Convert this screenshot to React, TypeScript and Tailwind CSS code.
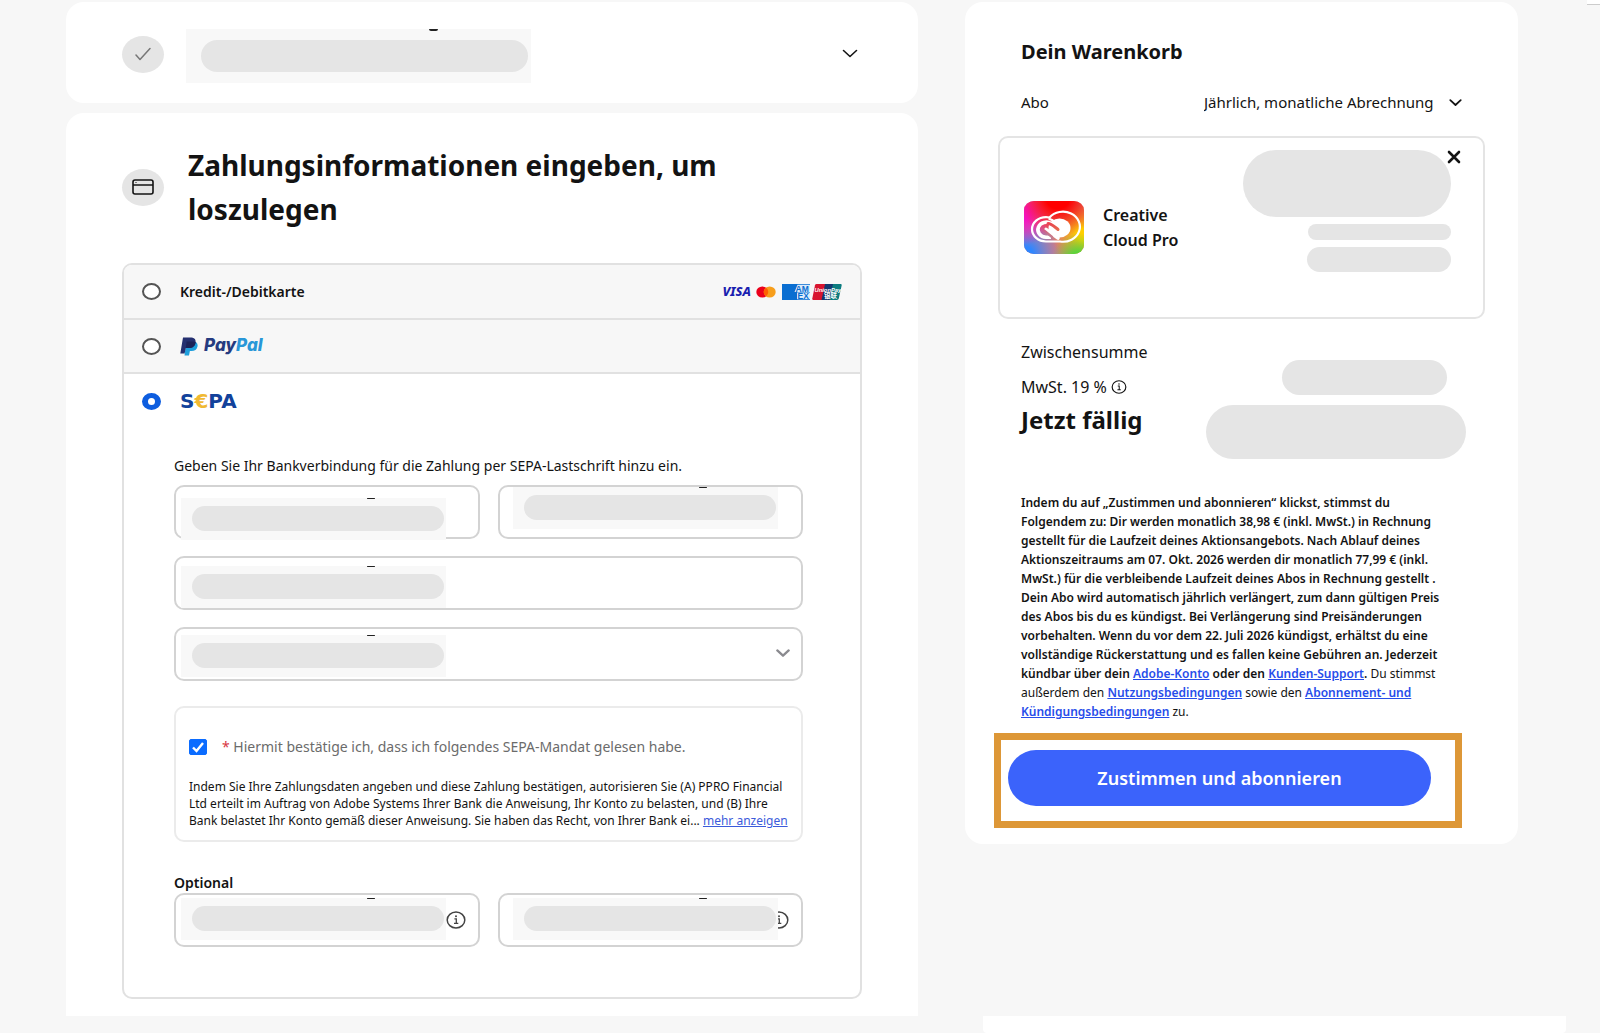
import { useState } from "react";

const INPUT =
  "block h-[54px] w-full rounded-[10px] border-2 border-[#d3d3d3] bg-white px-4 text-sm outline-none";

const RADIO =
  "h-[17px] w-[19px] appearance-none rounded-[50%] border-2 border-[#555] bg-white checked:border-x-[6px] checked:border-y-[5px] checked:border-[#0d5ddf]";

const LINK = "font-semibold text-[#274dea] underline";

// Greyed-out value on a light patch
function Redacted({ className }: { className: string }) {
  return (
    <span className={`pointer-events-none absolute h-[42px] w-[265px] bg-[#f8f8f8] pt-2 pl-[11px] ${className}`}>
      <span className="block h-[25px] w-[252px] rounded-full bg-[#e5e5e5]" />
      <span className="absolute top-0 left-[186px] h-px w-2 rounded-full bg-[#222]" />
    </span>
  );
}

function Chevron({ className, stroke }: { className: string; stroke: number }) {
  return (
    <svg viewBox="0 0 16 10" fill="none" aria-hidden="true" className={className}>
      <path d="M1.5 1.5L8 7.5l6.5-6" stroke="currentColor" strokeWidth={stroke} strokeLinecap="round" strokeLinejoin="round" />
    </svg>
  );
}

function InfoIcon({ className }: { className: string }) {
  return (
    <svg viewBox="0 0 20 18" fill="none" aria-hidden="true" className={className}>
      <ellipse cx="10" cy="9" rx="8.8" ry="8" stroke="currentColor" strokeWidth="1.5" />
      <path d="M8.4 7.8h1.9v4.4M8 12.4h4.3" stroke="currentColor" strokeWidth="1.3" />
      <circle cx="10" cy="5.2" r="1" fill="currentColor" />
    </svg>
  );
}

function PayPalMark() {
  return (
    <svg viewBox="0 0 18 19" aria-hidden="true" className="h-[19px] w-[18px]">
      <path d="M6.3 4.5h6.8c3.4 0 5 1.9 4.4 5-.6 3.2-2.8 4.5-6 4.5H9.9l-.9 4.5H4.5z" fill="#1f9fdc" />
      <path d="M3 .5h7.2c4 0 6 1.8 5.3 5.3-.7 3.8-3.2 5.3-7 5.3H5.8L4.6 16.5H.3z" fill="#253070" />
      <path d="M6.6 4.5h6.5c1 0 1.9.2 2.5.6v.7c-.7 3.8-3.2 5.3-7 5.3H5.8z" fill="#1d2258" />
    </svg>
  );
}

function MastercardMark() {
  return (
    <svg viewBox="0 0 20 12" aria-hidden="true" className="h-3 w-5">
      <ellipse cx="6.3" cy="6" rx="6" ry="5.6" fill="#eb001b" />
      <ellipse cx="13.7" cy="6" rx="6" ry="5.6" fill="#f79e1b" />
      <path d="M10 1.6a6 5.6 0 0 1 0 8.8 6 5.6 0 0 1 0-8.8z" fill="#ff5f00" />
    </svg>
  );
}

function AmexMark() {
  return (
    <svg viewBox="0 0 28 16" aria-hidden="true" className="h-4 w-7">
      <rect width="28" height="16" fill="#0a6ed1" />
      <path d="M15.5.8H28V8H12.5zM15 8.5h13v6.7H15z" fill="#dcebfa" />
      <text x="13.5" y="7.5" fontSize="8.5" fontWeight="700" fill="#0a6ed1" fontFamily="Liberation Sans, sans-serif">AM</text>
      <text x="15.5" y="14.8" fontSize="8.5" fontWeight="700" fill="#0a6ed1" fontFamily="Liberation Sans, sans-serif">EX</text>
    </svg>
  );
}

function UnionPayMark() {
  return (
    <svg viewBox="0 0 30 16" aria-hidden="true" className="h-4 w-[30px]">
      <path d="M4.5 0H14l-3.5 16H1.5Q0 16 .3 14.5L3 1.3Q3.3 0 4.5 0z" fill="#d8142f" />
      <path d="M13 0h9l-3.5 16h-9z" fill="#14386f" />
      <path d="M21 0h7.5q1.5 0 1.2 1.3L26.8 14.6Q26.5 16 25 16h-7.5z" fill="#0c7c80" />
      <text x="2.500" y="7.500" fontSize="5.800" fontWeight="700" fontStyle="italic" fill="#fff" fontFamily="Liberation Sans, sans-serif">UnionPay</text>
      <text x="12" y="14" fontSize="6.500" fontWeight="700" fill="#fff" fontFamily="Noto Sans CJK SC, sans-serif">银联</text>
    </svg>
  );
}

function CreativeCloudMark() {
  return (
    <svg viewBox="0 0 60 53" fill="none" aria-hidden="true" className="h-[53px] w-[60px] shrink-0">
      <defs>
        <clipPath id="cc-clip"><rect width="60" height="53" rx="10" ry="9" /></clipPath>
        <radialGradient id="cc-red" cx="34" cy="-4" r="40" gradientUnits="userSpaceOnUse">
          <stop offset="0.3" stopColor="#ff0000" /><stop offset="1" stopColor="#ff2000" stopOpacity="0" />
        </radialGradient>
        <radialGradient id="cc-pink" cx="0" cy="12" r="32" gradientUnits="userSpaceOnUse">
          <stop offset="0.2" stopColor="#f413c8" /><stop offset="1" stopColor="#f413c8" stopOpacity="0" />
        </radialGradient>
        <radialGradient id="cc-blue" cx="2" cy="53" r="34" gradientUnits="userSpaceOnUse">
          <stop offset="0.2" stopColor="#2f86ff" /><stop offset="1" stopColor="#4a8bff" stopOpacity="0" />
        </radialGradient>
        <radialGradient id="cc-green" cx="54" cy="58" r="26" gradientUnits="userSpaceOnUse">
          <stop offset="0.15" stopColor="#3fdf3a" /><stop offset="1" stopColor="#5edb3c" stopOpacity="0" />
        </radialGradient>
        <radialGradient id="cc-yellow" cx="60" cy="34" r="32" gradientUnits="userSpaceOnUse">
          <stop offset="0.2" stopColor="#ffcf00" /><stop offset="1" stopColor="#ffa000" stopOpacity="0" />
        </radialGradient>
        <mask id="cc-mask" maskUnits="userSpaceOnUse" x="0" y="0" width="60" height="53">
          <g stroke="#fff">
            <path d="M22 40.5a14 12.2 0 0 1 0-24.400q2 0 3.500.4A17 15 0 1 1 36 40.500z" strokeWidth="2.200" />
            <ellipse cx="35.500" cy="27" rx="11" ry="9.500" fill="#fff" stroke="none" />
            <path d="M27 36.200h-5a8.500 7.500 0 1 1 5.500-13.500" strokeWidth="3.600" />
            <path d="M22 28.500l12 8.500" strokeWidth="3.600" strokeLinecap="round" />
            <path d="M24.500 17.500q4 1 8 5" strokeWidth="2.200" />
          </g>
          <g stroke="#000" strokeLinecap="round">
            <path d="M24 22.500c3 0 5 2 10 6" strokeWidth="3" />
            <path d="M20 29.500l8 6.500" strokeWidth="2.400" />
          </g>
        </mask>
      </defs>
      <g clipPath="url(#cc-clip)">
        <rect width="60" height="53" fill="#d67a80" />
        <rect width="60" height="53" fill="url(#cc-blue)" />
        <rect width="60" height="53" fill="url(#cc-pink)" />
        <rect width="60" height="53" fill="url(#cc-yellow)" />
        <rect width="60" height="53" fill="url(#cc-red)" />
        <rect width="60" height="53" fill="url(#cc-green)" />
      </g>
      <rect width="60" height="53" fill="#fff" mask="url(#cc-mask)" />
    </svg>
  );
}

export default function App() {
  const [method, setMethod] = useState("sepa");

  return (
    <div className="relative min-h-screen overflow-hidden bg-[#f7f7f7] font-['Noto_Sans','Liberation_Sans',sans-serif] text-[#131313]">
      <div className="absolute top-0 right-0 h-[5px] w-[13px] border-b border-[#ccc] bg-white" />

      <main className="grid grid-cols-[852fr_553fr] items-start gap-x-[47px] pt-[2px] pr-[82px] pl-[66px]">
        <div className="flex flex-col gap-[10px]">
          {/* Finished step */}
          <section className="flex items-center rounded-[18px] bg-white pt-[23px] pr-[60px] pb-5 pl-14">
            <span className="flex h-[37px] w-[42px] shrink-0 items-center justify-center rounded-[50%] bg-[#e5e5e5] text-[#777]">
              <svg viewBox="0 0 16 14" fill="none" aria-hidden="true" className="h-[14px] w-4">
                <path d="M1 8l4 4.5L15 1.5" stroke="currentColor" strokeWidth="1.5" strokeLinecap="round" strokeLinejoin="round" />
              </svg>
            </span>
            <div className="relative mt-1 ml-[22px] h-[54px] w-[345px] bg-[#f8f8f8] pt-[11px] pl-[15px]">
              <div className="h-8 w-[327px] rounded-full bg-[#e5e5e5]" />
              <span className="absolute top-0 left-[243px] h-[2px] w-[9px] rounded-b-full bg-[#222]" />
            </div>
            <button type="button" aria-label="Schritt öffnen" className="ml-auto">
              <Chevron className="h-[10px] w-4" stroke={1.6} />
            </button>
          </section>

          {/* Payment step */}
          <section className="rounded-t-[18px] bg-white px-14 pt-[30px] pb-[17px]">
            <div className="flex items-center gap-6">
              <span className="flex h-[37px] w-[42px] shrink-0 items-center justify-center rounded-[50%] bg-[#e5e5e5]">
                <svg viewBox="0 0 22 16" fill="none" aria-hidden="true" className="h-4 w-[22px]">
                  <rect x="1" y="1" width="20" height="14" rx="2" stroke="currentColor" strokeWidth="1.6" />
                  <path d="M1 6h20" stroke="currentColor" strokeWidth="1.5" />
                  <path d="M3.5 3.5h1" stroke="currentColor" />
                </svg>
              </span>
              <h1 className="text-[28px] leading-[44px] font-bold">
                Zahlungsinformationen eingeben, um
                <br />
                loszulegen
              </h1>
            </div>

            <div className="mt-8 overflow-hidden rounded-[10px] border-2 border-[#e1e1e1]">
              <label className="flex h-[55px] items-center border-b-2 border-[#e1e1e1] bg-[#f7f7f7] px-[18px]">
                <input type="radio" name="method" checked={method === "card"} onChange={() => setMethod("card")} className={RADIO} />
                <span className="ml-[19px] text-sm font-semibold">Kredit-/Debitkarte</span>
                <span className="ml-auto flex items-center">
                  <span className="mr-[5px] text-[13px] font-extrabold text-[#1a1fb0] italic">VISA</span>
                  <MastercardMark />
                  <span className="ml-[6px] flex gap-[2px]">
                    <AmexMark />
                    <UnionPayMark />
                  </span>
                </span>
              </label>
              <label className="flex h-[54px] items-center border-b-2 border-[#e1e1e1] bg-[#f7f7f7] px-[18px]">
                <input type="radio" name="method" aria-label="PayPal" checked={method === "paypal"} onChange={() => setMethod("paypal")} className={RADIO} />
                <span className="ml-[19px] flex items-center gap-[6px]">
                  <PayPalMark />
                  <span className="font-['Inter','Open_Sans',sans-serif] text-[17px] font-extrabold text-[#253b80] italic">
                    Pay<span className="text-[#2997d8]">Pal</span>
                  </span>
                </span>
              </label>
              <label className="flex h-[54px] items-center px-[18px]">
                <input type="radio" name="method" aria-label="SEPA" checked={method === "sepa"} onChange={() => setMethod("sepa")} className={RADIO} />
                <span className="ml-[19px] font-['DejaVu_Sans',sans-serif] text-xl font-bold text-[#12429b]">
                  S<span className="text-[#f0b932]">€</span>PA
                </span>
              </label>

              <div className="pt-7 pr-[57px] pb-[50px] pl-[50px]">
                <p className="text-sm leading-5">
                  Geben Sie Ihr Bankverbindung für die Zahlung per SEPA-Lastschrift hinzu ein.
                </p>
                <div className="mt-[9px] grid grid-cols-2 gap-x-[18px] gap-y-[17px]">
                  <div className="relative">
                    <input type="text" aria-label="Vorname" className={INPUT} />
                    <Redacted className="top-[13px] left-[7px]" />
                  </div>
                  <div className="relative">
                    <input type="text" aria-label="Nachname" className={INPUT} />
                    <Redacted className="top-[2px] left-[15px]" />
                  </div>
                  <div className="relative col-span-2">
                    <input type="text" aria-label="IBAN" className={INPUT} />
                    <Redacted className="top-[10px] left-[7px]" />
                  </div>
                  <div className="relative col-span-2">
                    <select aria-label="Land" className={`${INPUT} appearance-none`} />
                    <Redacted className="top-2 left-[7px]" />
                    <Chevron className="pointer-events-none absolute top-[22px] right-[13px] h-[9px] w-[14px] text-[#8a8a8f]" stroke={2.6} />
                  </div>
                </div>

                <div className="mt-[25px] rounded-[10px] border-2 border-[#ebebeb] px-[13px] pt-[29px] pb-[11px]">
                  <label className="flex items-center text-sm leading-5 text-[#6b6b6b]">
                    <span className="relative flex">
                      <input type="checkbox" defaultChecked className="peer h-4 w-[18px] appearance-none rounded-[2px] border border-[#777] checked:border-[#0b6cff] checked:bg-[#0b6cff]" />
                      <svg viewBox="0 0 18 16" fill="none" aria-hidden="true" className="pointer-events-none absolute inset-0 hidden h-4 w-[18px] peer-checked:block">
                        <path d="M4 8.5l3.500 3.500L14 4" stroke="#fff" strokeWidth="2.400" />
                      </svg>
                    </span>
                    <span className="ml-[15px]">
                      <span className="text-[#d7373f]">*</span> Hiermit bestätige ich, dass ich folgendes SEPA-Mandat gelesen habe.
                    </span>
                  </label>
                  <p className="mt-[21px] text-xs leading-[17px] whitespace-nowrap">
                    Indem Sie Ihre Zahlungsdaten angeben und diese Zahlung bestätigen, autorisieren Sie (A) PPRO Financial
                    <br />
                    Ltd erteilt im Auftrag von Adobe Systems Ihrer Bank die Anweisung, Ihr Konto zu belasten, und (B) Ihre
                    <br />
                    Bank belastet Ihr Konto gemäß dieser Anweisung. Sie haben das Recht, von Ihrer Bank ei...{" "}
                    <a href="#mandat" className="text-[#3b5bdb] underline">mehr anzeigen</a>
                  </p>
                </div>

                <h2 className="mt-[31px] text-sm leading-5 font-semibold">Optional</h2>
                <div className="grid grid-cols-2 gap-x-[18px]">
                  <div className="relative">
                    <input type="text" aria-label="Firma" className={INPUT} />
                    <Redacted className="top-[5px] left-[7px]" />
                    <InfoIcon className="absolute top-[18px] right-[14px] h-[18px] w-5 text-[#444]" />
                  </div>
                  <div className="relative">
                    <input type="text" aria-label="USt-IdNr." className={INPUT} />
                    <InfoIcon className="absolute top-[18px] right-[14px] h-[18px] w-5 text-[#444]" />
                    <Redacted className="top-[5px] left-[15px]" />
                  </div>
                </div>
              </div>
            </div>
          </section>
        </div>

        {/* Cart */}
        <aside className="rounded-[18px] bg-white px-[33px] pt-9 pb-4">
          <h2 className="px-[23px] text-xl leading-7 font-bold">Dein Warenkorb</h2>
          <div className="mt-6 flex items-center justify-between pr-[23px] pl-[23px] text-[15px] leading-6">
            <label htmlFor="plan">Abo</label>
            <span className="relative">
              <select id="plan" className="appearance-none bg-transparent pr-7 outline-none">
                <option>Jährlich, monatliche Abrechnung</option>
              </select>
              <Chevron className="pointer-events-none absolute top-[9px] right-0 h-2 w-[13px]" stroke={2.2} />
            </span>
          </div>

          <div className="relative mt-[22px] flex h-[183px] items-center rounded-[10px] border-2 border-[#e4e4e4] pr-8 pl-6">
            <CreativeCloudMark />
            <p className="ml-[19px] text-base leading-[25px] font-semibold">
              Creative
              <br />
              Cloud Pro
            </p>
            <div className="mb-[34px] ml-auto flex flex-col items-end gap-[7px]">
              <div className="h-[67px] w-[208px] rounded-full bg-[#e5e5e5]" />
              <div className="h-4 w-[143px] rounded-full bg-[#e5e5e5]" />
              <div className="h-[25px] w-36 rounded-full bg-[#e5e5e5]" />
            </div>
            <button type="button" aria-label="Entfernen" className="absolute top-3 right-[22px]">
              <svg viewBox="0 0 14 14" fill="none" aria-hidden="true" className="h-[14px] w-[14px]">
                <path d="M2 2l10 10M12 2L2 12" stroke="currentColor" strokeWidth="2.600" strokeLinecap="round" />
              </svg>
            </button>
          </div>

          <div className="mt-[21px] flex justify-between pr-[19px] pl-[23px]">
            <div>
              <p className="text-base leading-6">Zwischensumme</p>
              <p className="mt-[11px] flex items-center gap-1 text-base leading-6">
                MwSt. 19 % <InfoIcon className="h-[14px] w-4" />
              </p>
              <p className="mt-[5px] text-2xl leading-8 font-bold">Jetzt fällig</p>
            </div>
            <div className="mt-5 flex flex-col items-end gap-[10px]">
              <div className="mr-[19px] h-[35px] w-[165px] rounded-full bg-[#e5e5e5]" />
              <div className="h-[54px] w-[260px] rounded-full bg-[#e5e5e5]" />
            </div>
          </div>

          <p className="mt-[34px] ml-[23px] text-xs leading-[19px] whitespace-nowrap">
            <span className="font-semibold">
              Indem du auf „Zustimmen und abonnieren“ klickst, stimmst du
              <br />
              Folgendem zu: Dir werden monatlich 38,98 € (inkl. MwSt.) in Rechnung
              <br />
              gestellt für die Laufzeit deines Aktionsangebots. Nach Ablauf deines
              <br />
              Aktionszeitraums am 07. Okt. 2026 werden dir monatlich 77,99 € (inkl.
              <br />
              MwSt.) für die verbleibende Laufzeit deines Abos in Rechnung gestellt .
              <br />
              Dein Abo wird automatisch jährlich verlängert, zum dann gültigen Preis
              <br />
              des Abos bis du es kündigst. Bei Verlängerung sind Preisänderungen
              <br />
              vorbehalten. Wenn du vor dem 22. Juli 2026 kündigst, erhältst du eine
              <br />
              vollständige Rückerstattung und es fallen keine Gebühren an. Jederzeit
              <br />
              kündbar über dein <a href="#konto" className={LINK}>Adobe-Konto</a> oder den{" "}
              <a href="#support" className={LINK}>Kunden-Support</a>.
            </span>{" "}
            Du stimmst
            <br />
            außerdem den <a href="#nutzung" className={LINK}>Nutzungsbedingungen</a> sowie den{" "}
            <a href="#abo" className={LINK}>
              Abonnement- und
              <br />
              Kündigungsbedingungen
            </a>{" "}
            zu.
          </p>

          <div className="mt-3 -ml-1 mr-[23px] border-[7px] border-[#dd9737] pt-[10px] pr-6 pb-[15px] pl-[7px]">
            <button type="button" className="h-14 w-full rounded-full bg-[#3b63fb] text-lg font-semibold text-white">
              Zustimmen und abonnieren
            </button>
          </div>
        </aside>
      </main>

      <div className="mr-[34px] ml-auto h-[17px] w-[583px] rounded-b-[4px] bg-white" />
    </div>
  );
}
